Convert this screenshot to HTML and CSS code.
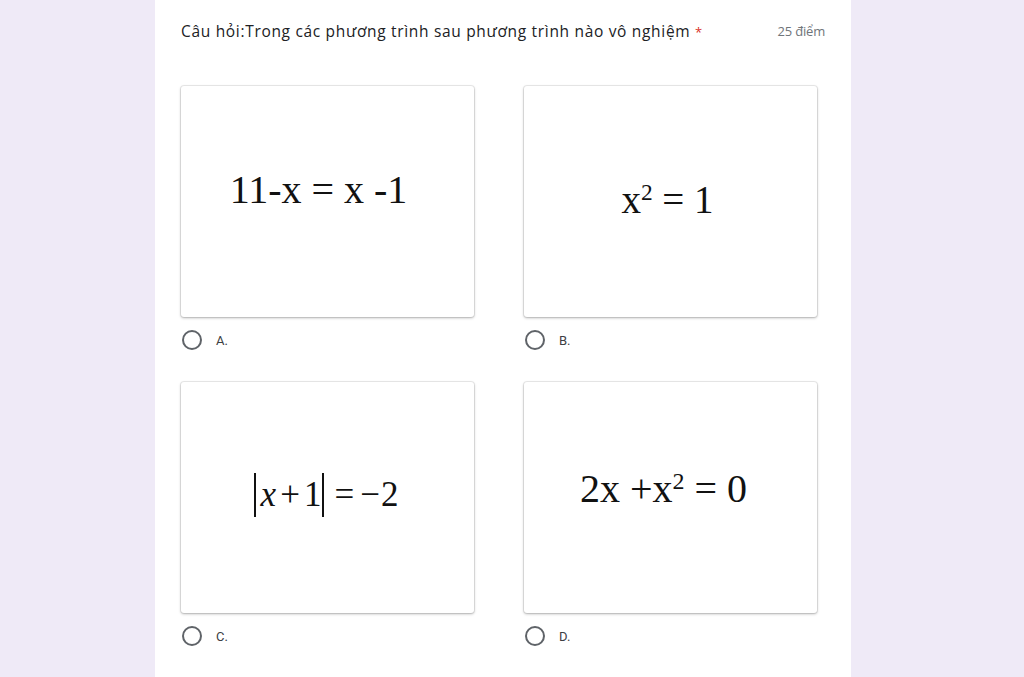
FILE: index.html
```html
<!DOCTYPE html>
<html lang="vi">
<head>
<meta charset="utf-8">
<title>Câu hỏi</title>
<link rel="stylesheet" href="styles.css">
</head>
<body>
<div class="page">
  <div class="card">
    <div class="q-head">
      <div class="q-title">Câu hỏi:Trong các phương trình sau phương trình nào vô nghiệm <span class="req">*</span></div>
      <div class="q-points">25 điểm</div>
    </div>
    <div class="options">
      <div class="option">
        <div class="img img-a"><div class="eq eq-a">11-x = x -1</div></div>
        <label class="choice"><span class="radio"></span><span class="lbl">A.</span></label>
      </div>
      <div class="option">
        <div class="img img-b"><div class="eq eq-b">x<sup>2</sup> = 1</div></div>
        <label class="choice"><span class="radio"></span><span class="lbl">B.</span></label>
      </div>
      <div class="option">
        <div class="img img-c"><div class="eq eq-c"><span class="bar"></span><i>x</i><span class="op">+</span>1<span class="bar"></span><span class="op eqs">=</span><span class="minus">−</span>2</div></div>
        <label class="choice"><span class="radio"></span><span class="lbl">C.</span></label>
      </div>
      <div class="option">
        <div class="img img-d"><div class="eq eq-d">2x +x<sup>2</sup> = 0</div></div>
        <label class="choice"><span class="radio"></span><span class="lbl">D.</span></label>
      </div>
    </div>
  </div>
</div>
</body>
</html>
```
FILE: styles.css
```css
html, body {
  margin: 0;
  padding: 0;
}
body {
  background: #efeaf7;
  height: 677px;
  overflow: hidden;
  font-family: Roboto, "Noto Sans", Arial, sans-serif;
}
.page {
  padding-left: 155px;
}
.card {
  width: 696px;
  height: 677px;
  background: #fff;
  box-sizing: border-box;
  padding: 19px 26px 0 26px;
}
.q-head {
  display: flex;
  justify-content: space-between;
  align-items: center;
  height: 24px;
}
.q-title {
  font-family: "Open Sans", Roboto, sans-serif;
  font-size: 15.5px;
  color: #202124;
  letter-spacing: 0.68px;
}
.req {
  color: #d93025;
  font-size: 13px;
}
.q-points {
  font-family: "Open Sans", Roboto, sans-serif;
  font-size: 13px;
  color: #70757a;
  letter-spacing: -0.2px;
}
.options {
  margin-top: 43px;
  display: grid;
  grid-template-columns: 293px 293px;
  column-gap: 50px;
  row-gap: 32px;
}
.img {
  height: 231px;
  background: #fff;
  border-radius: 3px;
  box-shadow: 0 0 0 1px rgba(0,0,0,0.07), 0 1px 3px rgba(0,0,0,0.28);
  display: flex;
  align-items: center;
  justify-content: center;
  box-sizing: border-box;
}
.eq {
  font-family: "Liberation Serif", "Times New Roman", serif;
  color: #111;
  white-space: pre;
  line-height: 1;
}
.eq sup {
  font-size: 0.6em;
  vertical-align: 0.55em;
  line-height: 0;
}
.img-a { padding: 0 18px 24px 0; }
.eq-a { font-size: 40px; }
.img-b { padding: 0 6px 4px 0; }
.eq-b { font-size: 39px; }
.img-c { padding: 0 4px 6px 0; }
.eq-c { font-size: 35px; display: flex; align-items: center; }
.eq-c i { padding-left: 3px; }
.op { margin: 0 4px; }
.eqs { margin: 0 6px 0 8px; }
.minus { margin-right: 1px; }
.bar {
  display: inline-block;
  width: 2px;
  height: 44px;
  background: #111;
  margin: 0 2px 0 1px;
}
.img-d { padding: 0 14px 17px 0; }
.eq-d { font-size: 40px; }
.choice {
  margin-top: 13px;
  display: flex;
  align-items: center;
  height: 20px;
  padding-left: 1px;
}
.radio {
  width: 20px;
  height: 20px;
  box-sizing: border-box;
  border: 2px solid #5f6368;
  border-radius: 50%;
}
.lbl {
  margin-left: 14px;
  font-size: 13px;
  color: #3c4043;
}
```
